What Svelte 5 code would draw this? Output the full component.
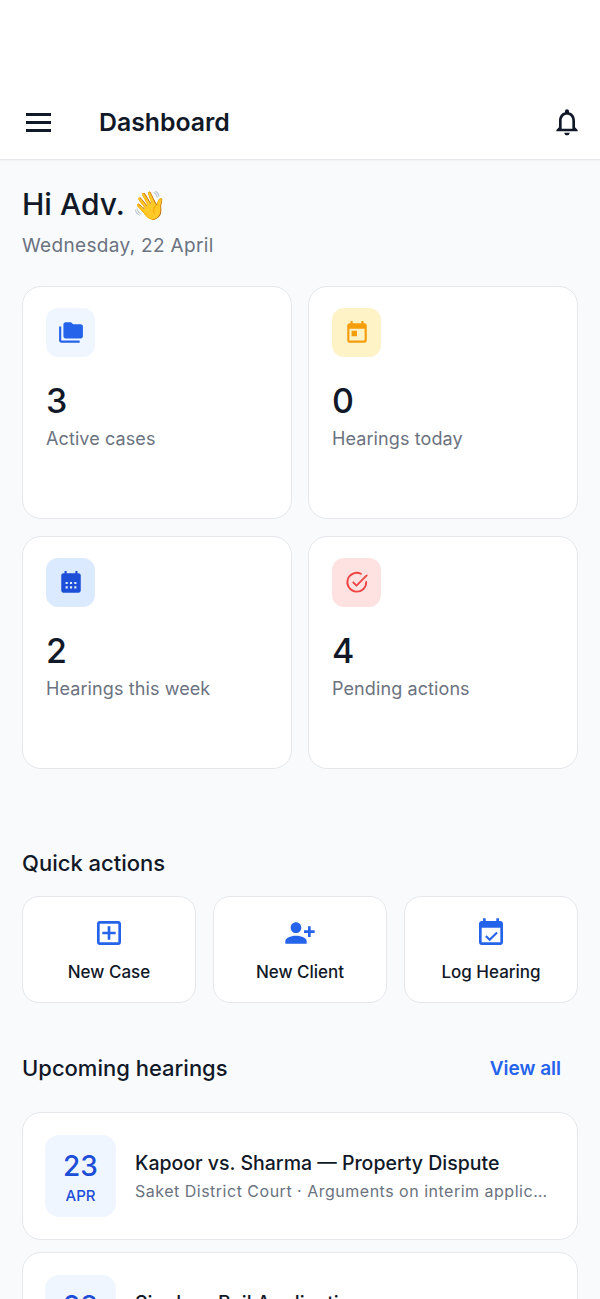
<script lang="ts">
  const stats = [
    { value: 3, label: "Active cases", tone: "sky", icon: "folder" },
    { value: 0, label: "Hearings today", tone: "amber", icon: "today" },
    { value: 2, label: "Hearings this week", tone: "blue", icon: "week" },
    { value: 4, label: "Pending actions", tone: "red", icon: "check" },
  ];
  const actions = [
    { label: "New Case", icon: "plus" },
    { label: "New Client", icon: "person" },
    { label: "Log Hearing", icon: "log" },
  ];
  const hearings = [
    { day: 23, month: "APR", title: "Kapoor vs. Sharma — Property Dispute", sub: "Saket District Court · Arguments on interim application" },
    { day: 28, month: "APR", title: "Singh — Bail Application", sub: "Delhi High Court · Bail hearing" },
  ];
</script>

{#snippet icon(name: string)}
  <svg viewBox="0 0 24 24" aria-hidden="true">
    {#if name === "folder"}
      <path d="M3 6H1v13c0 1.100.9 2 2 2h17v-2H3V6z" /><path d="M21 4h-7l-2-2H7c-1.100 0-2 .9-2 2v11c0 1.100.9 2 2 2h14c1.100 0 2-.9 2-2V6c0-1.100-.9-2-2-2z" />
    {:else if name === "today"}
      <path d="M19 3h-1V1h-2v2H8V1H6v2H5c-1.100 0-2 .9-2 2v14c0 1.100.9 2 2 2h14c1.100 0 2-.9 2-2V5c0-1.100-.9-2-2-2zm0 16H5V8h14v11zM7 10h5v5H7z" />
    {:else if name === "week"}
      <path d="M19 3h-1V1h-2v2H8V1H6v2H5c-1.100 0-2 .9-2 2v14c0 1.100.9 2 2 2h14c1.100 0 2-.9 2-2V5c0-1.100-.9-2-2-2zM7 11h2v2H7zm4 0h2v2h-2zm4 0h2v2h-2zM7 15h2v2H7zm4 0h2v2h-2zm4 0h2v2h-2z" fill-rule="evenodd" />
    {:else if name === "check"}
      <path d="M20.500 11a8.700 8.700 0 1 1-4.800-7.500" fill="none" stroke="currentColor" stroke-width="1.700" stroke-linecap="round" /><path d="M8.500 11.500l3 3L21 5" fill="none" stroke="currentColor" stroke-width="1.700" stroke-linecap="round" stroke-linejoin="round" />
    {:else if name === "plus"}
      <path d="M19 3H5c-1.100 0-2 .9-2 2v14c0 1.100.9 2 2 2h14c1.100 0 2-.9 2-2V5c0-1.100-.9-2-2-2zm0 16H5V5h14v14zM11 17h2v-4h4v-2h-4V7h-2v4H7v2h4z" />
    {:else if name === "person"}
      <path d="M15 12c2.200 0 4-1.800 4-4s-1.800-4-4-4-4 1.800-4 4 1.800 4 4 4zm-9-2V7H4v3H1v2h3v3h2v-3h3v-2H6zm9 4c-2.700 0-8 1.300-8 4v2h16v-2c0-2.700-5.300-4-8-4z" transform="matrix(-1 0 0 1 24 0)" />
    {:else}
      <path d="M19 3h-1V1h-2v2H8V1H6v2H5c-1.100 0-2 .9-2 2v14c0 1.100.9 2 2 2h14c1.100 0 2-.9 2-2V5c0-1.100-.9-2-2-2zm0 16H5V8h14v11zM16 11l-5 5-2.300-2.300-1.100 1.100 3.400 3.400 6.100-6.100z" />
    {/if}
  </svg>
{/snippet}

<div class="page">
  <header class="appbar">
    <button class="icon-btn" aria-label="Menu">
      <span class="burger"><i></i><i></i><i></i></span>
    </button>
    <h1>Dashboard</h1>
    <button class="icon-btn bell" aria-label="Notifications">
      <svg viewBox="0 0 24 24"><path d="M12 22c1.100 0 2-.9 2-2h-4c0 1.100.9 2 2 2zm6-6v-5c0-3.070-1.630-5.640-4.500-6.320V4c0-.83-.67-1.500-1.500-1.500s-1.500.67-1.500 1.500v.68C7.640 5.360 6 7.920 6 11v5l-2 2v1h16v-1l-2-2zm-2 1H8v-6c0-2.480 1.510-4.500 4-4.500s4 2.020 4 4.500v6z" /></svg>
    </button>
  </header>

  <main>
    <section class="greeting">
      <h2>Hi Adv. <span class="wave">👋</span></h2>
      <p>Wednesday, 22 April</p>
    </section>

    <section class="stats">
      {#each stats as s}
        <article class="card stat">
          <div class="badge {s.tone}">{@render icon(s.icon)}</div>
          <div class="value">{s.value}</div>
          <div class="label">{s.label}</div>
        </article>
      {/each}
    </section>

    <h3 class="quick-title">Quick actions</h3>
    <section class="actions">
      {#each actions as a}
        <button class="card action">
          {@render icon(a.icon)}
          <span>{a.label}</span>
        </button>
      {/each}
    </section>

    <div class="upcoming-head">
      <h3>Upcoming hearings</h3>
      <span class="view-all">View all</span>
    </div>
    <section class="hearings">
      {#each hearings as h}
        <article class="card hearing">
          <div class="date"><b>{h.day}</b><small>{h.month}</small></div>
          <div class="info">
            <div class="title">{h.title}</div>
            <div class="sub">{h.sub}</div>
          </div>
        </article>
      {/each}
    </section>
  </main>
</div>

<style>
  :global(body) { margin: 0; background: #f8fafc; font-family: Inter, "Noto Sans", sans-serif; color: #111827; }
  .page { height: 1299px; overflow: hidden; background: #f8fafc; }
  .appbar { display: flex; align-items: center; height: 160px; box-sizing: border-box; padding: 85px 14px 0 19px; background: #fff; border-bottom: 1px solid #e5e7eb; box-shadow: 0 1px 2px rgba(0,0,0,.04); }
  .appbar h1 { margin: 0 0 0 42px; flex: 1; font-size: 24.800px; font-weight: 600; color: #111827; }
  .icon-btn { border: 0; background: none; padding: 0; width: 38px; height: 38px; display: flex; align-items: center; justify-content: center; color: #111827; }
  .burger { display: grid; gap: 5px; width: 25px; }
  .burger i { display: block; height: 3px; background: #111827; }
  .bell svg { flex: none; width: 32px; height: 32px; fill: currentColor; }
  main { padding: 0 22px; }
  .greeting { padding-top: 25px; }
  .greeting h2 { margin: 0; font-size: 30px; line-height: 38px; font-weight: 500; color: #111827; }
  .wave { font-size: 28px; }
  .greeting p { margin: 10px 0 0; font-size: 19px; line-height: 24px; letter-spacing: .33px; color: #6b7280; }
  .card { background: #fff; border: 1px solid #e5e7eb; box-sizing: border-box; }
  .stats { display: grid; grid-template-columns: 270px 270px; gap: 17px 16px; margin-top: 28px; }
  .stat { height: 233px; border-radius: 19px; padding: 21px 23px; }
  .badge { width: 49px; height: 49px; border-radius: 12px; display: flex; align-items: center; justify-content: center; }
  .badge svg { width: 26px; height: 26px; fill: currentColor; }
  .sky { background: #eff6ff; color: #2563eb; }
  .amber { background: #fef3c7; color: #f59e0b; }
  .blue { background: #dbeafe; color: #1d4ed8; }
  .red { background: #fee2e2; color: #ef4444; }
  .value { margin-top: 22px; font-size: 34px; line-height: 44px; font-weight: 500; color: #111827; }
  .label { margin-top: 4px; font-size: 18px; line-height: 24px; letter-spacing: .1px; color: #6b7280; }
  h3 { margin: 0; font-size: 22px; line-height: 30px; font-weight: 500; color: #111827; }
  .quick-title { margin-top: 79px; }
  .actions { display: grid; grid-template-columns: repeat(3, 174px); gap: 17px; margin-top: 18px; }
  .action { height: 107px; border-radius: 17px; display: flex; flex-direction: column; align-items: center; padding: 20px 0 0; font: inherit; color: #111827; }
  .action svg { width: 32px; height: 32px; fill: #2563eb; }
  .action span { margin-top: 11px; font-size: 17px; line-height: 24px; font-weight: 500; }
  .upcoming-head { display: flex; justify-content: space-between; align-items: center; margin-top: 50px; padding-right: 17px; }
  .view-all { font-size: 19px; font-weight: 600; color: #2563eb; }
  .hearings { display: grid; grid-template-columns: minmax(0, 1fr); gap: 12px; margin-top: 29px; }
  .hearing { height: 128px; border-radius: 19px; display: flex; align-items: center; gap: 19px; padding: 0 29px 0 22px; }
  .date { flex: none; box-sizing: border-box; width: 71px; height: 82px; padding-top: 3px; border-radius: 14px; background: #eff6ff; color: #1d4ed8; display: flex; flex-direction: column; align-items: center; justify-content: center; }
  .date b { font-size: 28px; line-height: 34px; font-weight: 500; }
  .date small { margin-top: 3px; font-size: 15px; line-height: 20px; font-weight: 500; }
  .info { min-width: 0; flex: 1; padding-bottom: 1px; }
  .title { font-size: 19.500px; line-height: 28px; font-weight: 500; color: #111827; white-space: nowrap; overflow: hidden; text-overflow: ellipsis; }
  .sub { margin-top: 3px; font-size: 16px; line-height: 22px; color: #6b7280; white-space: nowrap; overflow: hidden; text-overflow: ellipsis; letter-spacing: .5px; }
</style>
